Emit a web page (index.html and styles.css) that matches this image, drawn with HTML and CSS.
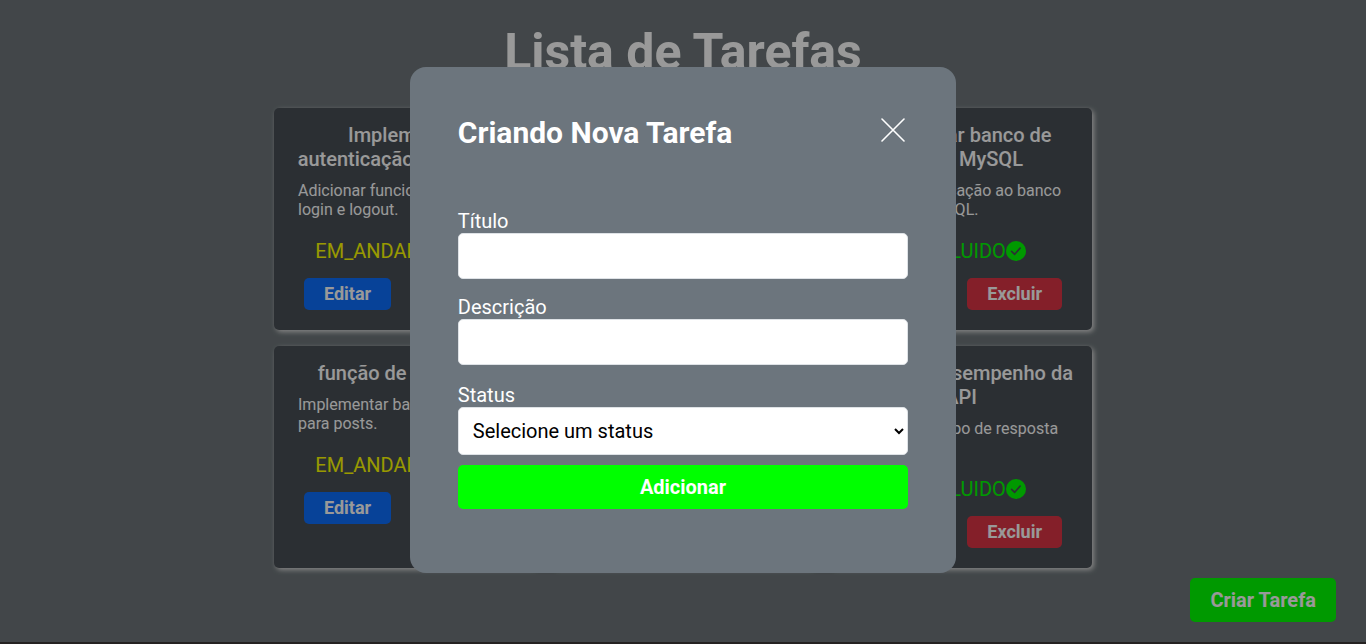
FILE: index.html
```html
<!DOCTYPE html>
<html lang="pt-BR">
<head>
  <meta charset="utf-8">
  <meta name="viewport" content="width=device-width, initial-scale=1">
  <title>Lista de Tarefas</title>
  <link rel="stylesheet" href="styles.css">
</head>
<body>
  <main class="page">
    <h1 class="page-title">Lista de Tarefas</h1>
    <section class="tasks">
      <article class="card">
        <h2 class="card-title">Implementar autenticação de usuário</h2>
        <p class="card-text">Adicionar funcionalidade de login e logout.</p>
        <p class="status doing">EM_ANDAMENTO</p>
        <div class="actions"><button class="btn edit" type="button">Editar</button><button class="btn delete" type="button">Excluir</button></div>
      </article>
      <article class="card"></article>
      <article class="card">
        <h2 class="card-title">Configurar banco de dados MySQL</h2>
        <p class="card-text">Conectar aplicação ao banco de dados MySQL.</p>
        <p class="status done">CONCLUIDO<svg class="status-icon" viewBox="0 0 20 20" aria-hidden="true"><circle cx="10" cy="10" r="10" fill="currentColor"/><path d="M5.6 10.3l3.1 3 5.4-6.2" fill="none" stroke="#494f56" stroke-width="1.7" stroke-linecap="round" stroke-linejoin="round"/></svg></p>
        <div class="actions"><button class="btn edit" type="button">Editar</button><button class="btn delete" type="button">Excluir</button></div>
      </article>
      <article class="card">
        <h2 class="card-title">função de pesquisa</h2>
        <p class="card-text">Implementar barra de busca para posts.</p>
        <p class="status doing">EM_ANDAMENTO</p>
        <div class="actions"><button class="btn edit" type="button">Editar</button><button class="btn delete" type="button">Excluir</button></div>
      </article>
      <article class="card"></article>
      <article class="card">
        <h2 class="card-title">Otimizar desempenho da API</h2>
        <p class="card-text">Reduzir o tempo de resposta da API.</p>
        <p class="status done">CONCLUIDO<svg class="status-icon" viewBox="0 0 20 20" aria-hidden="true"><circle cx="10" cy="10" r="10" fill="currentColor"/><path d="M5.6 10.3l3.1 3 5.4-6.2" fill="none" stroke="#494f56" stroke-width="1.7" stroke-linecap="round" stroke-linejoin="round"/></svg></p>
        <div class="actions"><button class="btn edit" type="button">Editar</button><button class="btn delete" type="button">Excluir</button></div>
      </article>
    </section>
  </main>
  <footer class="footer"></footer>
  <button class="create" type="button">Criar Tarefa</button>

  <div class="overlay">
    <div class="modal" role="dialog" aria-modal="true" aria-labelledby="modal-title">
      <header class="modal-head">
        <h2 class="modal-title" id="modal-title">Criando Nova Tarefa</h2>
        <button class="close" type="button" aria-label="Fechar"><svg class="close-icon" viewBox="0 0 24 24" aria-hidden="true"><path d="M1 1l22 22M23 1L1 23" fill="none" stroke="currentColor" stroke-width="1.6" stroke-linecap="round"/></svg></button>
      </header>
      <form class="form">
        <div class="field">
          <label for="titulo">Título</label>
          <input class="control" id="titulo" type="text">
        </div>
        <div class="field">
          <label for="descricao">Descrição</label>
          <input class="control" id="descricao" type="text">
        </div>
        <div class="field">
          <label for="status">Status</label>
          <select class="control select" id="status"><option>Selecione um status</option></select>
        </div>
        <button class="submit" type="submit">Adicionar</button>
      </form>
    </div>
  </div>
</body>
</html>
```
FILE: styles.css
```css
* {
  box-sizing: border-box;
  margin: 0;
  padding: 0;
}

body {
  font-family: Roboto, "Liberation Sans", sans-serif;
  color: #fff;
  background: #6e767a;
}

button, input, select {
  font-family: inherit;
}

.page {
  padding: 23px 0 74px;
}

.page-title {
  font-size: 50px;
  line-height: 58px;
  text-align: center;
  margin-bottom: 27px;
}

.tasks {
  max-width: 818px;
  margin: 0 auto;
  display: grid;
  grid-template-columns: repeat(3, 1fr);
  gap: 16px;
}

.card {
  padding: 15px 0 20px;
  background: #494f56;
  border-radius: 5px;
  box-shadow: 2px 2px 5px #ddd;
}

.card-title {
  padding: 0 16px;
  font-size: 20px;
  font-weight: 500;
  line-height: 24px;
  text-align: center;
}

.card-text {
  margin-top: 10px;
  padding: 0 24px;
  font-size: 16px;
  line-height: 19px;
}

.status {
  display: flex;
  align-items: center;
  justify-content: center;
  margin-top: 20px;
  font-size: 20px;
  line-height: 24px;
}

.doing {
  padding-right: 20px;
  color: #ff0;
}

.done {
  color: #0f0;
}

.status-icon {
  width: 20px;
  height: 20px;
}

.actions {
  display: flex;
  justify-content: space-between;
  margin-top: 15px;
  padding: 0 30px;
}

.btn {
  height: 32px;
  padding: 0 20px 2px;
  border: 0;
  border-radius: 5px;
  color: #fff;
  font-size: 18px;
  font-weight: 700;
}

.edit {
  background: #0d6efd;
}

.delete {
  background: #dc3545;
}

.create {
  position: fixed;
  right: 30px;
  bottom: 22px;
  height: 44px;
  padding: 0 20px;
  border: 0;
  border-radius: 5px;
  background: #0f0;
  color: #fff;
  font-size: 20px;
  font-weight: 700;
}

.footer {
  height: 2px;
  background: #3f3a3a;
}

.overlay {
  position: fixed;
  inset: 0;
  display: grid;
  place-items: center;
  padding-bottom: 4px;
  background: rgba(0, 0, 0, 0.4);
}

.modal {
  width: 40%;
  padding: 48px 48px 64px;
  border-radius: 16px;
  background: #6c757d;
}

.modal-head {
  display: flex;
  align-items: flex-start;
  justify-content: space-between;
  margin-bottom: 58px;
}

.modal-title {
  font-size: 30px;
  line-height: 36px;
}

.close {
  width: 30px;
  height: 30px;
  border: 0;
  background: none;
  color: #fff;
}

.close-icon {
  display: block;
  width: 24px;
  height: 24px;
  margin: auto;
}

.form {
  display: flex;
  flex-direction: column;
}

.field {
  display: flex;
  flex-direction: column;
  margin-bottom: 16px;
  font-size: 20px;
  line-height: 24px;
}

.field:last-of-type {
  margin-top: 2px;
  margin-bottom: 10px;
}

.control {
  height: 46px;
  padding: 0 10px;
  border: 1px solid #dee2e6;
  border-radius: 5px;
  background: #fff;
  color: #000;
  font-size: 20px;
}

.select {
  height: 48px;
  padding: 0;
  padding-left: 10px;
}

.submit {
  height: 44px;
  border: 0;
  border-radius: 5px;
  background: #0f0;
  color: #fff;
  font-size: 20px;
  font-weight: 700;
}
```
